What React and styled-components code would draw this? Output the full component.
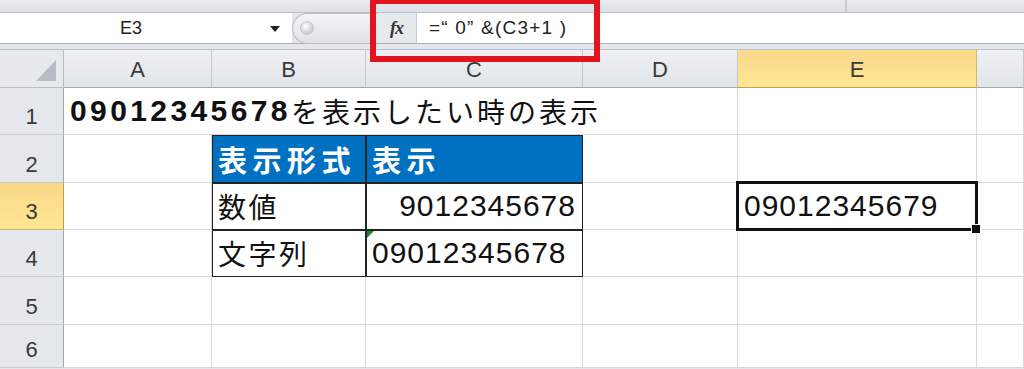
import styled, { createGlobalStyle, css } from "styled-components";

const GlobalStyle = createGlobalStyle`
    html, body {
        margin: 0;
        padding: 0;
        background: #ffffff;
        overflow: hidden;
    }
    * {
        box-sizing: border-box;
    }
`;

const FONT = `"Liberation Sans", "Noto Sans CJK JP", sans-serif`;

const Screen = styled.div`
    position: relative;
    width: 1024px;
    height: 369px;
    overflow: hidden;
    background: #e3e6ea;
    font-family: ${FONT};
`;

const RibbonEdge = styled.div`
    height: 13px;
    display: flex;
    background: linear-gradient(#e9ecf0, #dde1e6);
    border-bottom: 1px solid #b9c0c9;
`;

const RibbonPart = styled.div`
    width: ${(p) => p.$w || "auto"};
    flex: ${(p) => (p.$w ? "none" : 1)};
    border-right: ${(p) => (p.$edge ? "2px solid #c6ccd4" : "none")};
`;

const FormulaBar = styled.div`
    display: flex;
    height: 31px;
    background: #ffffff;
    border-bottom: 1px solid #a8b1bc;
`;

const NameBox = styled.div`
    width: 292px;
    display: flex;
    align-items: center;
    font-size: 18px;
    color: #222;
`;

const NameText = styled.div`
    width: 262px;
    text-align: center;
`;

const DropArrow = styled.div`
    width: 0;
    height: 0;
    border-left: 5px solid transparent;
    border-right: 5px solid transparent;
    border-top: 6px solid #222;
    margin-left: 8px;
    margin-top: 2px;
`;

const GripArea = styled.div`
    width: 85px;
    display: flex;
    align-items: center;
    background: #e3e6ea;
`;

const Grip = styled.div`
    width: 100%;
    height: 31px;
    border-radius: 16px 0 0 16px;
    background: linear-gradient(#f4f5f7, #dfe2e7);
    border: 1px solid #b8bfc8;
    border-right: none;
    display: flex;
    align-items: center;
    padding-left: 7px;
`;

const GripDot = styled.div`
    width: 14px;
    height: 14px;
    border-radius: 50%;
    background: radial-gradient(circle at 40% 35%, #ffffff, #c9cdd3 70%);
    border: 1px solid #c2c7ce;
`;

const FxButton = styled.div`
    width: 40px;
    display: flex;
    align-items: center;
    justify-content: center;
    background: #e6e9ed;
    border-right: 1px solid #c5cbd3;
    font-family: "Liberation Serif", serif;
    font-style: italic;
    font-weight: bold;
    font-size: 18px;
    color: #333;
    letter-spacing: -1px;
`;

const FormulaInput = styled.div`
    flex: 1;
    display: flex;
    align-items: center;
    padding-left: 12px;
    font-size: 19px;
    color: #222;
    letter-spacing: 1.2px;
`;

const Gap = styled.div`
    height: 5px;
    background: #e3e6ea;
`;

const Callout = styled.div`
    position: absolute;
    left: 370px;
    top: -2px;
    width: 230px;
    height: 64px;
    border: 6px solid #e3141e;
    pointer-events: none;
`;

const Sheet = styled.div`
    display: grid;
    grid-template-columns: 64px 148px 154px 217px 155px 239px 1fr;
    grid-template-rows: 38px 47px 48px 47px 47px 48px 1fr;
    height: 319px;
    background: #ffffff;
    border-top: 1px solid #b9c0c9;
`;

const Corner = styled.div`
    position: relative;
    background: #e6e9ed;
    border-right: 1px solid #b5bec9;
    border-bottom: 1px solid #b5bec9;
    &::after {
        content: "";
        position: absolute;
        right: 7px;
        bottom: 6px;
        border-left: 20px solid transparent;
        border-bottom: 21px solid #b6bcc5;
    }
`;

const ColHead = styled.div`
    display: flex;
    align-items: center;
    justify-content: center;
    font-size: 22px;
    font-weight: 300;
    color: #3a3a3a;
    background: ${(p) =>
        p.$active
            ? "linear-gradient(#f9d88a, #ffe793)"
            : "linear-gradient(#eef0f3, #e1e5ea)"};
    border-right: 1px solid ${(p) => (p.$active ? "#d9b565" : "#c2c8d0")};
    border-bottom: 1px solid ${(p) => (p.$active ? "#c59b45" : "#9eaab7")};
    padding-top: 2px;
`;

const RowHead = styled.div`
    display: flex;
    align-items: flex-end;
    justify-content: center;
    padding-bottom: 4px;
    font-size: 22px;
    font-weight: 300;
    color: #3a3a3a;
    background: ${(p) =>
        p.$active
            ? "linear-gradient(#f9d88a, #ffe793)"
            : "#e4e7ec"};
    border-right: 1px solid ${(p) => (p.$active ? "#c59b45" : "#9eaab7")};
    border-bottom: 1px solid ${(p) => (p.$active ? "#d9b565" : "#c6ccd4")};
`;

const Cell = styled.div`
    position: relative;
    display: flex;
    align-items: flex-end;
    padding: 0 6px 5px;
    font-size: 28px;
    line-height: 1.2;
    color: #111;
    white-space: nowrap;
    grid-column: ${(p) => (p.$span ? `span ${p.$span}` : "auto")};
    justify-content: ${(p) => (p.$right ? "flex-end" : "flex-start")};
    border-right: 1px solid #d8d8d8;
    border-bottom: 1px solid #d8d8d8;

    ${(p) =>
        p.$table &&
        css`
            border-right: 1px solid #222;
            border-bottom: 1px solid #222;
            box-shadow: inset 1px 1px 0 #222;
        `}

    ${(p) =>
        p.$head &&
        css`
            background: #0070c0;
            color: #ffffff;
            font-weight: bold;
        `}

    ${(p) =>
        p.$note &&
        css`
            &::before {
                content: "";
                position: absolute;
                left: 1px;
                top: 1px;
                border-top: 7px solid #1e8a2e;
                border-right: 7px solid transparent;
            }
        `}

    ${(p) =>
        p.$selected &&
        css`
            z-index: 2;
            &::before {
                content: "";
                position: absolute;
                left: -2px;
                top: -2px;
                right: -2px;
                bottom: -2px;
                border: 3px solid #111;
            }
            &::after {
                content: "";
                position: absolute;
                right: -5px;
                bottom: -5px;
                width: 8px;
                height: 8px;
                background: #111;
                border: 1px solid #ffffff;
            }
        `}
`;

const Digits = styled.span`
    font-family: "Liberation Sans", sans-serif;
    font-size: 30px;
    letter-spacing: ${(p) => (p.$bold ? "3.4px" : "1px")};
    font-weight: ${(p) => (p.$bold ? "bold" : "normal")};
`;

const Kana = styled.span`
    font-family: "Noto Sans CJK JP", sans-serif;
    font-size: ${(p) => p.$size || "28px"};
    letter-spacing: ${(p) => p.$gap || "2.5px"};
`;

const columns = ["A", "B", "C", "D", "E", ""];

const App = () => {
    return (
        <Screen>
            <GlobalStyle />
            <RibbonEdge>
                <RibbonPart $w="847px" $edge />
                <RibbonPart />
            </RibbonEdge>
            <FormulaBar>
                <NameBox>
                    <NameText>E3</NameText>
                    <DropArrow />
                </NameBox>
                <GripArea>
                    <Grip>
                        <GripDot />
                    </Grip>
                </GripArea>
                <FxButton>fx</FxButton>
                <FormulaInput>=“ 0” &amp;(C3+1 )</FormulaInput>
            </FormulaBar>
            <Gap />
            <Sheet>
                <Corner />
                {columns.map((c, i) => (
                    <ColHead key={i} $active={c === "E"}>
                        {c}
                    </ColHead>
                ))}

                <RowHead>1</RowHead>
                <Cell $span={4}>
                    <Digits $bold>09012345678</Digits>
                    <Kana $gap="3px">を表示したい時の表示</Kana>
                </Cell>
                <Cell />
                <Cell />

                <RowHead>2</RowHead>
                <Cell />
                <Cell $table $head>
                    <Kana $size="29px" $gap="5.5px">表示形式</Kana>
                </Cell>
                <Cell $table $head>
                    <Kana $size="29px" $gap="5.5px">表示</Kana>
                </Cell>
                <Cell />
                <Cell />
                <Cell />

                <RowHead $active>3</RowHead>
                <Cell />
                <Cell $table>
                    <Kana>数値</Kana>
                </Cell>
                <Cell $table $right>
                    <Digits>9012345678</Digits>
                </Cell>
                <Cell />
                <Cell $selected>
                    <Digits>09012345679</Digits>
                </Cell>
                <Cell />

                <RowHead>4</RowHead>
                <Cell />
                <Cell $table>
                    <Kana>文字列</Kana>
                </Cell>
                <Cell $table $note>
                    <Digits>09012345678</Digits>
                </Cell>
                <Cell />
                <Cell />
                <Cell />

                <RowHead>5</RowHead>
                <Cell />
                <Cell />
                <Cell />
                <Cell />
                <Cell />
                <Cell />

                <RowHead>6</RowHead>
                <Cell />
                <Cell />
                <Cell />
                <Cell />
                <Cell />
                <Cell />
            </Sheet>
            <Callout />
        </Screen>
    );
};

export default App;
